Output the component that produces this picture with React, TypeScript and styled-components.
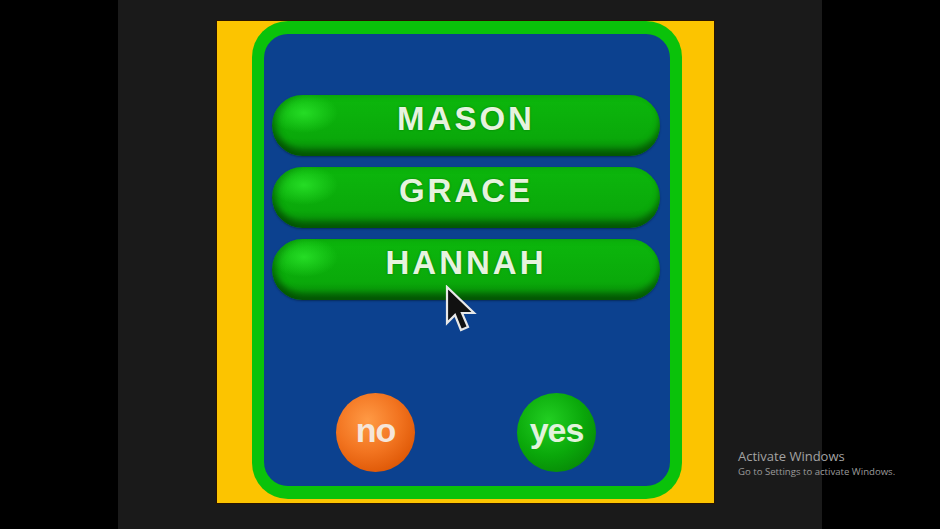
import React from "react";
import styled, { createGlobalStyle } from "styled-components";

const Global = createGlobalStyle`
  html, body { margin: 0; padding: 0; background: #000; }
  body { width: 940px; height: 529px; overflow: hidden; font-family: "Liberation Sans", Arial, sans-serif; }
`;

const Screen = styled.div`
  position: relative;
  width: 940px;
  height: 529px;
  display: flex;
  background: #000;
`;

const SideBar = styled.div<{ $w: number }>`
  width: ${(p) => p.$w}px;
  flex: none;
  background: #000;
`;

const Stage = styled.div`
  width: 704px;
  flex: none;
  background: #1a1a1a;
  padding: 21px 0 0 99px;
  box-sizing: border-box;
`;

const YellowPanel = styled.div`
  width: 497px;
  height: 482px;
  box-sizing: border-box;
  background: #fcc400;
  padding: 0 32px 4px 35px;
  box-shadow: 0 0 0 1px #2a1400;
  display: flex;
`;

const GreenFrame = styled.div`
  flex: 1;
  border-radius: 36px;
  background: #0ac20a;
  padding: 13px 12px 13px 12px;
  display: flex;
`;

const BluePanel = styled.div`
  flex: 1;
  border-radius: 24px;
  background: #0c418f;
  display: flex;
  flex-direction: column;
  padding: 61px 10px 14px 8px;
  box-sizing: border-box;
`;

const PillList = styled.div`
  display: flex;
  flex-direction: column;
  gap: 11px;
`;

const Pill = styled.div`
  height: 61px;
  border-radius: 31px;
  box-sizing: border-box;
  padding-bottom: 14px;
  display: flex;
  align-items: center;
  justify-content: center;
  background:
    radial-gradient(ellipse 34px 20px at 32px 18px, rgba(40, 225, 40, 0.9), rgba(40, 225, 40, 0) 100%),
    linear-gradient(to bottom, #0cb70c 0%, #0aa90a 70%, #088a08 100%);
  box-shadow:
    inset 0 -7px 6px rgba(0, 50, 0, 0.55),
    inset 6px 0 6px rgba(0, 60, 0, 0.25),
    0 1px 2px rgba(0, 0, 0, 0.35);
  color: #e6f3de;
  font-family: "Liberation Sans", Arial, sans-serif;
  font-weight: 700;
  font-size: 33px;
  letter-spacing: 3px;
  text-shadow: 0 0 2px rgba(0, 60, 0, 0.5);
`;

const ButtonRow = styled.div`
  margin-top: auto;
  display: flex;
  justify-content: center;
  gap: 102px;
`;

const Ball = styled.div<{ $tone: "orange" | "green" }>`
  width: 79px;
  height: 79px;
  border-radius: 50%;
  display: flex;
  align-items: center;
  justify-content: center;
  padding-bottom: 4px;
  box-sizing: border-box;
  background: ${(p) =>
    p.$tone === "orange"
      ? "radial-gradient(circle at 40% 35%, #ff9a45 0%, #f27420 45%, #e05a08 75%, #b84400 100%)"
      : "radial-gradient(circle at 40% 35%, #22cf22 0%, #0aa80a 50%, #078c07 78%, #045e04 100%)"};
  color: ${(p) => (p.$tone === "orange" ? "#f5e6da" : "#e2f3dc")};
  font-family: "Liberation Sans", Arial, sans-serif;
  font-weight: 700;
  font-size: 34px;
  letter-spacing: -1px;
`;

const Cursor = styled.svg`
  position: absolute;
  left: 444px;
  top: 285px;
`;

const Watermark = styled.div`
  position: absolute;
  left: 738px;
  top: 448px;
  font-family: "Open Sans", "Noto Sans", sans-serif;
  color: #a3a3a3;
  display: flex;
  flex-direction: column;
  gap: 1px;
`;

const WmTitle = styled.div`
  font-size: 13px;
  line-height: 16px;
`;

const WmSub = styled.div`
  font-size: 9.6px;
  line-height: 13px;
  color: #9a9a9a;
`;

export default function App() {
  const names = ["MASON", "GRACE", "HANNAH"];
  return (
    <>
      <Global />
      <Screen>
        <SideBar $w={118} />
        <Stage>
          <YellowPanel>
            <GreenFrame>
              <BluePanel>
                <PillList>
                  {names.map((n) => (
                    <Pill key={n}>{n}</Pill>
                  ))}
                </PillList>
                <ButtonRow>
                  <Ball $tone="orange">no</Ball>
                  <Ball $tone="green">yes</Ball>
                </ButtonRow>
              </BluePanel>
            </GreenFrame>
          </YellowPanel>
        </Stage>
        <SideBar $w={118} />
        <Cursor width="34" height="50" viewBox="0 0 34 50">
          <path
            d="M3 2 L3 38 L11 30 L17 45 L24 42 L18 28 L30 28 Z"
            fill="#111"
            stroke="#e8e8e8"
            strokeWidth="2.2"
            strokeLinejoin="miter"
          />
        </Cursor>
        <Watermark>
          <WmTitle>Activate Windows</WmTitle>
          <WmSub>Go to Settings to activate Windows.</WmSub>
        </Watermark>
      </Screen>
    </>
  );
}
